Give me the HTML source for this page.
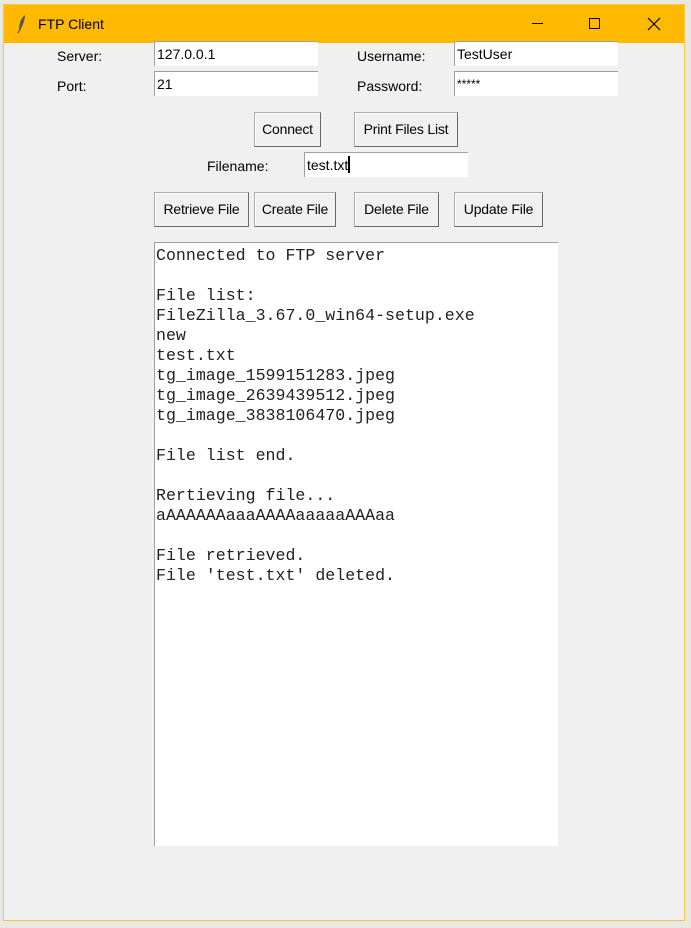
<!DOCTYPE html>
<html><head><style>
*{margin:0;padding:0;box-sizing:border-box}
body{width:691px;height:928px;background:#e9e7e1;position:relative;overflow:hidden;font-family:"Liberation Sans",sans-serif}
.win{position:absolute;left:3px;top:4px;width:682px;height:917px;background:#f0f0f0;border:1px solid #f5c842}
.in{position:absolute;left:-1px;top:-1px;width:682px;height:917px}
.title{position:absolute;left:1px;top:1px;width:680px;height:38px;background:#ffb900}
.t{position:absolute;font-size:14px;color:#000}
.lbl{position:absolute;font-size:14px;color:#000}
.ent{position:absolute;background:#fff;border-top:1px solid #a0a0a0;border-left:1px solid #a0a0a0;font-size:14px;padding-left:2px;line-height:25px;height:25px}
.btn{position:absolute;background:#f0f0f0;border:1px solid #adadad;border-right-color:#696969;border-bottom-color:#696969;box-shadow:inset 1px 1px #fff;font-size:14px;text-align:center;letter-spacing:-0.2px}
.txt{position:absolute;left:151px;top:238px;width:404px;height:604px;background:#fff;border-left:1px solid #a0a0a0;border-top:1px solid #a0a0a0;font-family:"Liberation Mono",monospace;font-size:16.6px;line-height:20px;padding:3px 0 0 1px;white-space:pre;color:#222}
</style></head><body>
<div class="win"><div class="in">
<div class="title">
<svg style="position:absolute;left:13px;top:9px" width="10" height="20" viewBox="0 0 10 20"><path d="M8 1 C3 5 2 11 2 17 L3 17 C5 12 8 7 8 1Z" fill="#555"/><path d="M2 17 L1 19" stroke="#333" stroke-width="1"/></svg>
<div class="t" style="left:34px;top:11px">FTP Client</div>
<div style="position:absolute;left:528px;top:18px;width:11px;height:1px;background:#000"></div>
<div style="position:absolute;left:585px;top:13px;width:11px;height:11px;border:1px solid #000"></div>
<svg style="position:absolute;left:643px;top:12px" width="14" height="14"><path d="M1 1L13 13M13 1L1 13" stroke="#000" stroke-width="1.2"/></svg>
</div>
<div class="lbl" style="left:54px;top:44px">Server:</div>
<div class="ent" style="left:151px;top:37px;width:164px">127.0.0.1</div>
<div class="lbl" style="left:354px;top:44px">Username:</div>
<div class="ent" style="left:451px;top:37px;width:164px">TestUser</div>
<div class="lbl" style="left:54px;top:74px">Port:</div>
<div class="ent" style="left:151px;top:67px;width:164px">21</div>
<div class="lbl" style="left:354px;top:74px">Password:</div>
<div class="ent" style="left:451px;top:67px;width:164px;font-size:12px">*****</div>
<div class="btn" style="left:251px;top:108px;width:67px;height:35px;line-height:33px">Connect</div>
<div class="btn" style="left:351px;top:108px;width:104px;height:35px;line-height:33px">Print Files List</div>
<div class="lbl" style="left:204px;top:154px">Filename:</div>
<div class="ent" style="left:301px;top:148px;width:164px">test.txt<span style="display:inline-block;width:1.5px;height:17px;background:#000;vertical-align:-3px"></span></div>
<div class="btn" style="left:151px;top:188px;width:95px;height:35px;line-height:33px">Retrieve File</div>
<div class="btn" style="left:251px;top:188px;width:82px;height:35px;line-height:33px">Create File</div>
<div class="btn" style="left:351px;top:188px;width:85px;height:35px;line-height:33px">Delete File</div>
<div class="btn" style="left:451px;top:188px;width:89px;height:35px;line-height:33px">Update File</div>
<div class="txt">Connected to FTP server

File list:
FileZilla_3.67.0_win64-setup.exe
new
test.txt
tg_image_1599151283.jpeg
tg_image_2639439512.jpeg
tg_image_3838106470.jpeg

File list end.

Rertieving file...
aAAAAAAaaaAAAAaaaaaAAAaa

File retrieved.
File 'test.txt' deleted.</div>
</div></div>
</body></html>
